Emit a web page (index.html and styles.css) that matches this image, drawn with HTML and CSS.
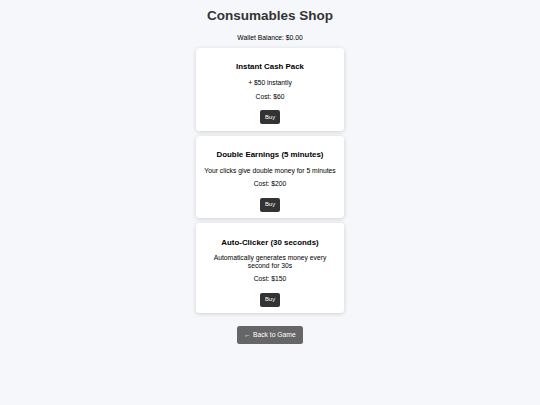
FILE: index.html
```html
<!DOCTYPE html>
<html lang="en">
<head>
<meta charset="utf-8">
<title>Consumables Shop</title>
<link rel="stylesheet" href="styles.css">
</head>
<body>
  <h1 class="title">Consumables Shop</h1>
  <p class="wallet">Wallet Balance: $0.00</p>

  <div class="item">
    <h3 class="item-name">Instant Cash Pack</h3>
    <p class="item-text">+ $50 instantly</p>
    <p class="item-text">Cost: $60</p>
    <button class="buy">Buy</button>
  </div>

  <div class="item">
    <h3 class="item-name">Double Earnings (5 minutes)</h3>
    <p class="item-text">Your clicks give double money for 5 minutes</p>
    <p class="item-text">Cost: $200</p>
    <button class="buy">Buy</button>
  </div>

  <div class="item">
    <h3 class="item-name">Auto-Clicker (30 seconds)</h3>
    <p class="item-text">Automatically generates money every second for 30s</p>
    <p class="item-text">Cost: $150</p>
    <button class="buy">Buy</button>
  </div>

  <button class="back">&larr; Back to Game</button>
</body>
</html>
```

FILE: styles.css
```css
html, body {
  margin: 0;
  background: #f5f7fa;
}

body {
  padding: 8.4px 0 0;
  font-family: "Liberation Sans", Arial, sans-serif;
  font-size: 6.75px;
  color: #000;
  text-align: center;
}

.title {
  margin: 0 0 10.5px;
  font-size: 13.5px;
  line-height: 1.15;
  font-weight: bold;
  color: #333;
}

.wallet {
  margin: 0 0 6.5px;
}

.item {
  box-sizing: border-box;
  width: 148px;
  margin: 0 auto 5.2px;
  padding: 6.3px;
  background: #fff;
  border-radius: 3.5px;
  box-shadow: 0 1px 4px rgba(0, 0, 0, 0.16);
}

.item-name {
  margin: 7.9px 0 7.8px;
  font-size: 7.9px;
  font-weight: bold;
}

.item-text {
  margin: 6.4px 0;
  line-height: 1.08;
}

.buy {
  margin-top: 3.6px;
  padding: 3.8px 5px;
  border: 0;
  border-radius: 2px;
  background: #333;
  color: #fff;
  font-family: "Liberation Sans", Arial, sans-serif;
  font-size: 5.9px;
  line-height: 1.15;
  vertical-align: top;
}

.back {
  margin-top: 7px;
  padding: 5.2px 7.6px;
  border: 0;
  border-radius: 2.5px;
  background: #666;
  color: #fff;
  font-family: "Liberation Sans", Arial, sans-serif;
  font-size: 6.75px;
  line-height: 1.15;
}
```
